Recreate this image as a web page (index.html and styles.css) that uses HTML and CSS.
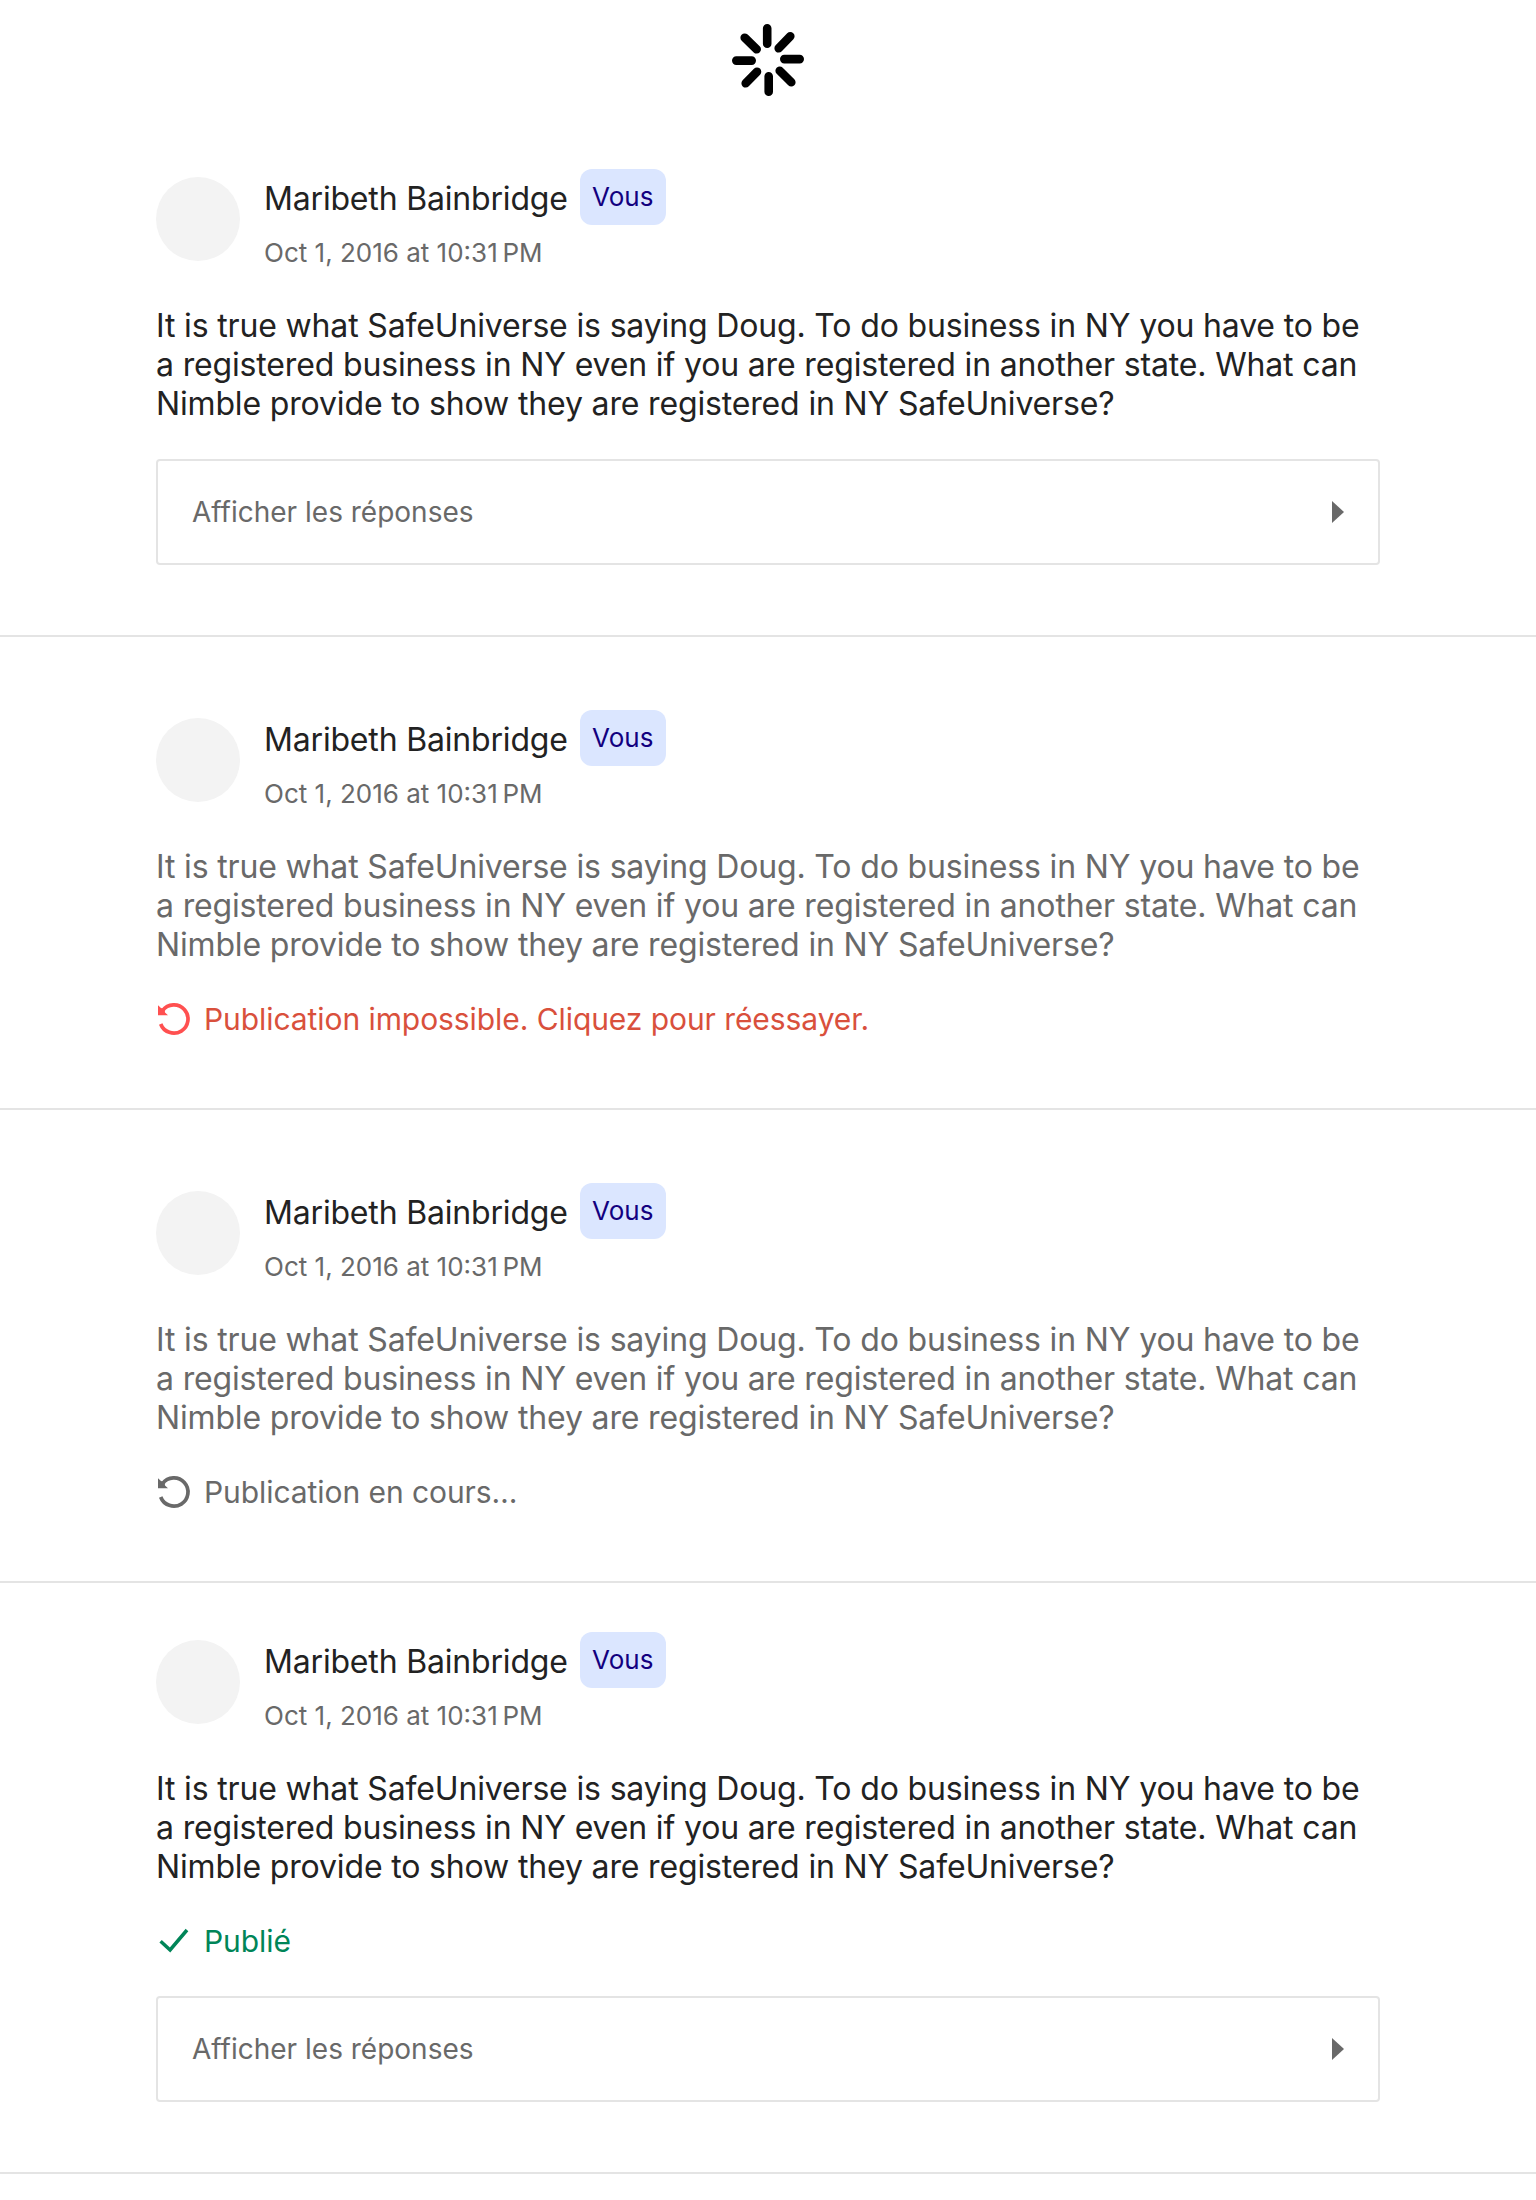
FILE: index.html
```html
<!DOCTYPE html>
<html lang="fr">
<head>
<meta charset="utf-8">
<title>Commentaires</title>
<link rel="stylesheet" href="styles.css">
</head>
<body>
<svg class="defs" width="0" height="0" aria-hidden="true">
  <symbol id="retry" viewBox="0 0 36 36">
    <path d="M4.7 23A14.1 14.1 0 1 0 6.6 9.6" fill="none" stroke="currentColor" stroke-width="3.7"/>
    <path d="M2 4.3L5 7L8.5 8L9 11.5L12 14.3H2Z" fill="currentColor"/>
  </symbol>
  <symbol id="check" viewBox="0 0 36 36">
    <path d="M4.6 18.3L14.1 27L31 7" fill="none" stroke="currentColor" stroke-width="3.5"/>
  </symbol>
</svg>
<div class="loading">
  <svg class="spinner" viewBox="0 0 72 72">
    <path d="M35.2 4.3V19.7M58.3 12.3L46.7 24.3M67.7 35.1H52.3M59.3 58.3L47.7 46.7M36.7 67.7V52.3M13.7 59.3L25 47.7M4.3 36.6H19.7M12.7 13.7L24.7 25.3"/>
  </svg>
</div>
<main>
  <article class="comment first">
    <header class="head">
      <span class="avatar"></span>
      <div class="meta">
        <div class="author"><span class="name">Maribeth Bainbridge</span><span class="badge">Vous</span></div>
        <time class="date">Oct 1, 2016 at 10:31&#8239;PM</time>
      </div>
    </header>
    <p class="body">It is true what SafeUniverse is saying Doug. To do business in NY you have to be a registered business in NY even if you are registered in another state. What can Nimble provide to show they are registered in NY SafeUniverse?</p>
    <div class="replies"><span>Afficher les réponses</span><svg class="caret" viewBox="0 0 12 22"><path d="M0 0L12 11L0 22Z"/></svg></div>
  </article>
  <article class="comment pending">
    <header class="head">
      <span class="avatar"></span>
      <div class="meta">
        <div class="author"><span class="name">Maribeth Bainbridge</span><span class="badge">Vous</span></div>
        <time class="date">Oct 1, 2016 at 10:31&#8239;PM</time>
      </div>
    </header>
    <p class="body">It is true what SafeUniverse is saying Doug. To do business in NY you have to be a registered business in NY even if you are registered in another state. What can Nimble provide to show they are registered in NY SafeUniverse?</p>
    <div class="status failed"><svg class="icon"><use href="#retry"/></svg><span>Publication impossible. Cliquez pour réessayer.</span></div>
  </article>
  <article class="comment pending">
    <header class="head">
      <span class="avatar"></span>
      <div class="meta">
        <div class="author"><span class="name">Maribeth Bainbridge</span><span class="badge">Vous</span></div>
        <time class="date">Oct 1, 2016 at 10:31&#8239;PM</time>
      </div>
    </header>
    <p class="body">It is true what SafeUniverse is saying Doug. To do business in NY you have to be a registered business in NY even if you are registered in another state. What can Nimble provide to show they are registered in NY SafeUniverse?</p>
    <div class="status"><svg class="icon"><use href="#retry"/></svg><span>Publication en cours…</span></div>
  </article>
  <article class="comment published">
    <header class="head">
      <span class="avatar"></span>
      <div class="meta">
        <div class="author"><span class="name">Maribeth Bainbridge</span><span class="badge">Vous</span></div>
        <time class="date">Oct 1, 2016 at 10:31&#8239;PM</time>
      </div>
    </header>
    <p class="body">It is true what SafeUniverse is saying Doug. To do business in NY you have to be a registered business in NY even if you are registered in another state. What can Nimble provide to show they are registered in NY SafeUniverse?</p>
    <div class="status done"><svg class="icon"><use href="#check"/></svg><span>Publié</span></div>
    <div class="replies"><span>Afficher les réponses</span><svg class="caret" viewBox="0 0 12 22"><path d="M0 0L12 11L0 22Z"/></svg></div>
  </article>
</main>
</body>
</html>
```
FILE: styles.css
```css
* { box-sizing: border-box; }
body {
  margin: 0;
  background: #fff;
  color: #222;
  font-family: Inter, "Liberation Sans", sans-serif;
}
.defs { display: none; }
.loading { display: flex; justify-content: center; height: 96px; padding-top: 24px; }
.spinner { width: 72px; height: 72px; fill: none; stroke: #000; stroke-width: 8.6; stroke-linecap: round; }
.comment { padding: 73px 156px 70px; border-bottom: 2px solid #e4e4e4; }
.pending { padding-bottom: 71px; }
.published { padding-top: 49px; }
.head { display: flex; gap: 24px; height: 99px; }
.avatar { width: 84px; height: 84px; margin-top: 8px; border-radius: 50%; background: #f3f3f3; }
.meta { display: flex; flex-direction: column; gap: 12px; }
.author { display: flex; align-items: center; gap: 12px; height: 56px; }
.name { padding-top: 2px; font-size: 32px; line-height: 39px; letter-spacing: -0.18px; }
.badge {
  display: flex; align-items: center; justify-content: center; width: 86px; height: 56px;
  border-radius: 12px; background: #dbe6ff; color: #12007f; font-size: 26px; line-height: 32px;
}
.date { color: #696969; font-size: 26px; line-height: 32px; }
.body { margin: 38px 0 0; font-size: 32px; line-height: 39px; letter-spacing: -0.155px; }
.pending .body { color: #696969; }
.replies {
  display: flex; align-items: center; justify-content: space-between;
  height: 106px; margin-top: 36px; padding: 0 34px;
  border: 2px solid #e4e4e4; border-radius: 4px; color: #696969; font-size: 28px; line-height: 34px;
}
.status { display: flex; align-items: center; gap: 12px; height: 36px; margin-top: 37px; color: #696969; font-size: 30px; line-height: 36px; letter-spacing: -0.07px; }
.status + .replies { margin-top: 37px; }
.failed { color: #d9503c; }
.failed .icon { color: #ff5050; }
.done { color: #008558; }
.icon { width: 36px; height: 36px; }
.caret { width: 12px; height: 22px; fill: #696969; }
```
